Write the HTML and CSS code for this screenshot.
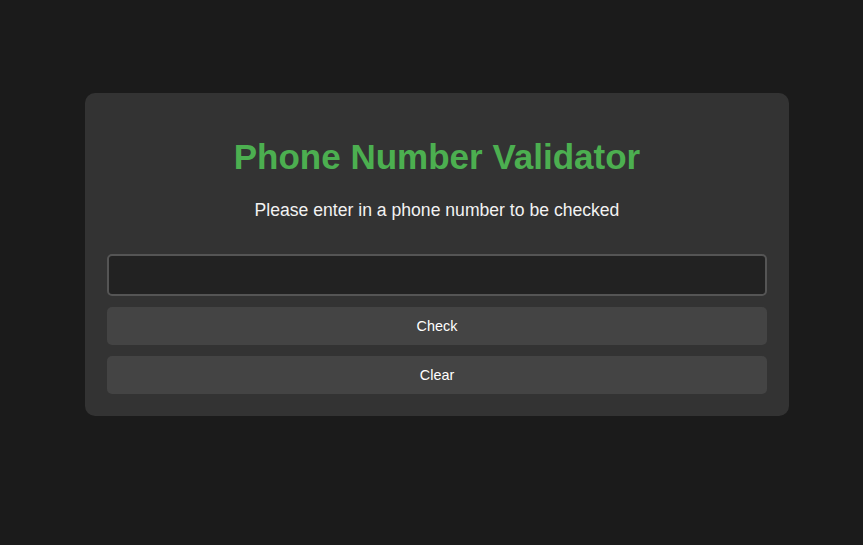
FILE: index.html
```html
<!DOCTYPE html>
<html lang="en">
<head>
<meta charset="utf-8">
<title>Phone Number Validator</title>
<link rel="stylesheet" href="styles.css">
</head>
<body>
<main class="card">
  <h1 class="title">Phone Number Validator</h1>
  <p class="subtitle">Please enter in a phone number to be checked</p>
  <input class="phone-input" type="text" id="user-input">
  <button class="btn" id="check-btn">Check</button>
  <button class="btn" id="clear-btn">Clear</button>
</main>
</body>
</html>
```
FILE: styles.css
```css
html, body {
  margin: 0;
  padding: 0;
  background: #1b1b1b;
  font-family: "Liberation Sans", Arial, sans-serif;
}
body {
  width: 863px;
  height: 545px;
  overflow: hidden;
}
.card {
  box-sizing: border-box;
  width: 704px;
  margin: 93px 0 0 85px;
  padding: 22px;
  background: #333333;
  border-radius: 10px;
  display: flex;
  flex-direction: column;
}
.title {
  margin: 22px 0 0;
  text-align: center;
  color: #4caf50;
  font-size: 35px;
  font-weight: bold;
  line-height: 40px;
}
.subtitle {
  margin: 23px 0 0;
  text-align: center;
  color: #f2f2f2;
  font-size: 17.6px;
  line-height: 20px;
}
.phone-input {
  box-sizing: border-box;
  margin: 34px 0 0;
  height: 42px;
  width: 100%;
  background: #222222;
  border: 2px solid #555555;
  border-radius: 5px;
  outline: none;
  color: #fff;
  font-size: 16px;
  padding: 0 10px;
}
.btn {
  box-sizing: border-box;
  margin: 11px 0 0;
  height: 38px;
  width: 100%;
  padding: 0;
  background: #444444;
  border: none;
  border-radius: 5px;
  color: #ffffff;
  font-family: "Liberation Sans", Arial, sans-serif;
  font-size: 14.4px;
}
```
